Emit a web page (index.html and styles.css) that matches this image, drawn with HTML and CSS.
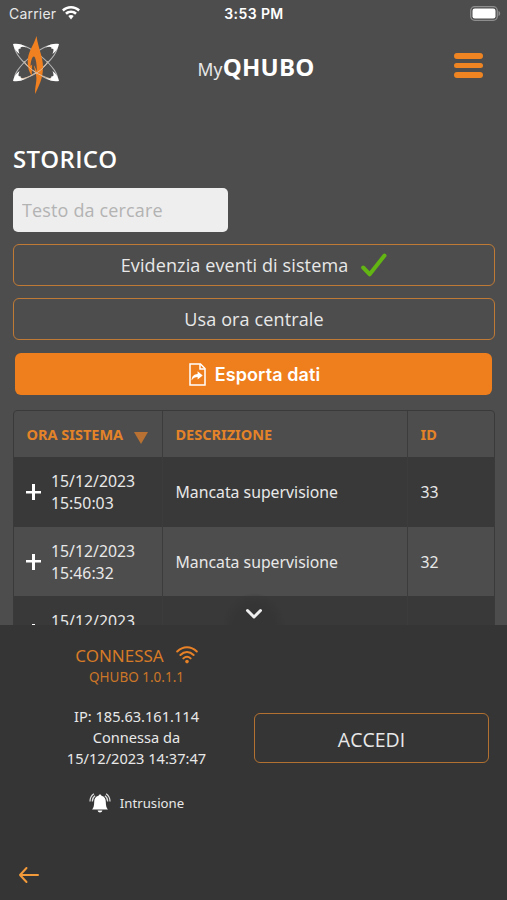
FILE: index.html
```html
<!DOCTYPE html>
<html lang="it">
<head>
<meta charset="utf-8">
<title>MyQHUBO</title>
<link rel="stylesheet" href="styles.css">
</head>
<body>
<div class="status">
  <div class="carrier">Carrier
    <svg width="18" height="14" viewBox="0 0 18 14" fill="#fff"><path d="M9 0C5.500 0 2.400 1.400 0 3.600l1.700 1.900C3.700 3.700 6.200 2.600 9 2.600s5.300 1.100 7.300 2.900L18 3.600C15.600 1.400 12.500 0 9 0z"/><path d="M9 4.500c-2.300 0-4.300.9-5.900 2.300l1.800 1.900C6 7.700 7.400 7.100 9 7.100s3 .6 4.100 1.600l1.800-1.900C13.300 5.400 11.300 4.500 9 4.500z"/><path d="M9 9c-1.100 0-2 .4-2.700 1L9 13.500l2.700-3.500C11 9.400 10.100 9 9 9z"/></svg>
  </div>
  <div class="clock">3:53 PM</div>
  <svg class="battery" width="31" height="15" viewBox="0 0 31 15"><rect x=".7" y=".7" width="26.600" height="13.600" rx="4" fill="none" stroke="#8e8e8e" stroke-width="1.300"/><rect x="2.500" y="2.500" width="23" height="10" rx="2.300" fill="#fff"/><path d="M28.500 5v5c1-.3 1.700-1.300 1.700-2.500S29.500 5.300 28.500 5z" fill="#8e8e8e"/></svg>
</div>
<header class="topbar">
  <svg class="logo" width="46" height="58" viewBox="0 0 46 58">
    <g fill="none" stroke="#b4b4b4" stroke-width="1"><ellipse cx="23" cy="26.500" rx="26.500" ry="8" transform="rotate(39 23 26.500)"/><ellipse cx="23" cy="26.500" rx="26.500" ry="8" transform="rotate(-39 23 26.500)"/></g>
    <g fill="#fff"><path d="M0 8c4-.8 9-.2 13.500 3.500C9 10 7 11 7.500 13 5 12 5 14 6.500 18 2.500 15 .5 11.500 0 8z"/><path d="M46 8c-4-.8-9-.2-13.500 3.500C37 10 39 11 38.500 13c2.500-1 2.500 1 1 5 4-3 6-6.500 6.500-10z"/><path d="M0 45c4 .8 9 .2 13.500-3.500C9 43 7 42 7.500 40 5 41 5 39 6.500 35 2.500 38 .5 41.500 0 45z"/><path d="M46 45c-4 .8-9 .2-13.500-3.500C37 43 39 42 38.500 40c2.500 1 2.500-1 1-5 4 3 6 6.500 6.500 10z"/></g>
    <path d="M23.500 0C20.500 10 14.500 16 14.700 26c.1 6 1.300 10 4.300 14-.5-4 0-9 1.200-13l2.300 10c2.500 7-1 13-.3 21C25.700 50 30 43 30 31 30 20 25 12 23.500 0z" fill="#f08020"/>
    <path d="M17.500 30c.3-5 1.700-9.500 3.200-9.500 2 0 3 7 3.300 15l-2.800-6-1.700 9c-.3-3-.5-6-.3-10z" fill="#5a5049"/>
    <path d="M11 25c4 8 16 15 27 18M35 25C31 34 19 41 8 43" fill="none" stroke="#dfc3a8" stroke-width=".9"/>
  </svg>
  <h1 class="brand">My<b>QHUBO</b></h1>
  <div class="menu"><span></span><span></span><span></span></div>
</header>
<main class="content">
  <h2>STORICO</h2>
  <input class="search" type="text" placeholder="Testo da cercare">
  <button class="outline first"><span>Evidenzia eventi di sistema</span>
    <svg width="26" height="24" viewBox="0 0 26 24" fill="none" stroke="#62b512" stroke-width="4" stroke-linecap="round" stroke-linejoin="round"><path d="M2.200 14.500l6.500 6.800L23.500 2.500"/></svg>
  </button>
  <button class="outline second"><span>Usa ora centrale</span></button>
  <button class="export">
    <svg width="17" height="23" viewBox="0 0 17 23" fill="none" stroke="#fff" stroke-width="1.500"><path d="M1 1h10.500L16 5.500V22H1z"/><path d="M11 1v5h5"/><path d="M2.600 17.500c.2-4.500 2.400-6.500 6-6.600V8.200l5.100 4.200-5.100 4V14c-2.500 0-4.300.8-6 3.500z" fill="#fff" stroke="none"/></svg>
    <span>Esporta dati</span>
  </button>
  <div class="table">
    <div class="row head"><div class="cell">ORA SISTEMA<i class="sort"></i></div><div class="cell">DESCRIZIONE</div><div class="cell">ID</div></div>
    <div class="row dark"><div class="cell"><i class="plus"></i><span>15/12/2023<br>15:50:03</span></div><div class="cell">Mancata supervisione</div><div class="cell">33</div></div>
    <div class="row"><div class="cell"><i class="plus"></i><span>15/12/2023<br>15:46:32</span></div><div class="cell">Mancata supervisione</div><div class="cell">32</div></div>
    <div class="row dark"><div class="cell"><i class="plus"></i><span>15/12/2023</span></div><div class="cell"></div><div class="cell"></div></div>
  </div>
</main>
<section class="sheet">
  <div class="handle"><svg width="18" height="12" viewBox="0 0 18 12" fill="none" stroke="#eee" stroke-width="3" stroke-linecap="round" stroke-linejoin="round"><path d="M2.500 2.500L9 9l6.500-6.500"/></svg></div>
  <div class="panels">
    <div class="info">
      <div class="state"><span>CONNESSA</span>
        <svg width="22" height="18" viewBox="0 0 22 18" fill="none" stroke="#e98227" stroke-width="2" stroke-linecap="round"><path d="M1.200 5.500C7-.3 15-.3 20.800 5.500M4.400 9c4-4 9.200-4 13.200 0M7.400 12.400c2.300-2.200 4.900-2.200 7.200 0"/><circle cx="11" cy="15.600" r="1.800" fill="#e98227" stroke="none"/></svg>
      </div>
      <div class="version">QHUBO 1.0.1.1</div>
      <div class="details">IP: 185.63.161.114<br>Connessa da<br>15/12/2023 14:37:47</div>
      <div class="alarm">
        <svg width="22" height="20" viewBox="0 0 22 20"><path d="M11 1.500c.9 0 1.400.6 1.400 1.300 3.200.7 4.400 3 4.400 6.100 0 4 .8 5.800 2.100 7.600H3.100c1.300-1.800 2.100-3.600 2.100-7.600 0-3.100 1.200-5.400 4.400-6.100 0-.7.500-1.300 1.400-1.300zM8.600 17.500h4.800c-.3 1.300-1.200 2-2.400 2s-2.100-.7-2.400-2z" fill="#fff"/><path d="M1 8.500c0-3.500 1.100-5.800 3.900-7.700M3.300 8.500c0-2.700.8-4.300 2.800-5.700M21 8.500c0-3.500-1.100-5.800-3.900-7.700M18.700 8.500c0-2.700-.8-4.300-2.800-5.700" fill="none" stroke="#ddd" stroke-width="1.200"/></svg>
        <span>Intrusione</span>
      </div>
    </div>
    <button class="login">ACCEDI</button>
  </div>
  <svg class="back" width="22" height="18" viewBox="0 0 22 18" fill="none" stroke="#f39a3b" stroke-width="2" stroke-linecap="round" stroke-linejoin="round"><path d="M20 9H2M8.500 2L2 9l6.500 7"/></svg>
</section>
</body>
</html>
```
FILE: styles.css
```css
* { box-sizing: border-box; }
body { margin: 0; height: 900px; overflow: hidden; position: relative; background: #4d4d4d; color: #e8e8e8; font-family: "Noto Sans", "Open Sans", sans-serif; }
svg { display: block; flex: none; }
button { font: inherit; color: inherit; background: none; padding: 0; display: flex; align-items: center; justify-content: center; }
.status { height: 28px; padding: 0 6px 0 9px; display: grid; grid-template-columns: 1fr auto 1fr; align-items: center; font-family: Inter, sans-serif; font-size: 14px; }
.carrier { display: flex; gap: 6px; align-items: center; letter-spacing: .2px; margin-top: -2px; }
.clock { font-weight: 600; color: #fff; letter-spacing: .4px; margin: -1px 2px 0 0; }
.battery { justify-self: end; margin-top: -1px; }
.topbar { height: 82px; padding: 8px 24px 0 13px; display: grid; grid-template-columns: 1fr auto 1fr; align-items: start; }
.brand { margin: 14px -8px 0 8px; font-size: 17.500px; font-weight: 400; line-height: 36px; letter-spacing: .2px; }
.brand b { font: 700 24px "Open Sans", sans-serif; letter-spacing: .2px; color: #fff; }
.menu { justify-self: end; display: grid; gap: 4px; margin-top: 17px; }
.menu span { width: 29px; height: 5.500px; border-radius: 3px; background: #ef8422; }
.content { padding: 32px 12px 0 13px; }
h2 { margin: 0; height: 46px; font: 600 24px/34px "Open Sans", sans-serif; letter-spacing: .3px; color: #fff; }
.search { display: block; width: 215px; height: 44px; padding: 0 8px 0 9px; border: 0; border-radius: 5px; background: #eee; font: 18px "Open Sans", sans-serif; letter-spacing: .15px; }
.search::placeholder { color: #b3b3b3; opacity: 1; }
.outline { width: 100%; height: 42px; border: 1.500px solid #c07a36; border-radius: 6px; font: 18px "Open Sans", sans-serif; letter-spacing: .12px; gap: 13px; }
.first { margin-top: 12px; }
.second { margin-top: 12px; }
.export { width: calc(100% - 5px); height: 42px; margin: 13px 0 15px 2px; padding: 1px 0 0 2px; border: 0; border-radius: 6px; background: #ef7e1c; color: #fff; font-family: Inter, sans-serif; font-size: 18px; font-weight: 600; gap: 9px; letter-spacing: .1px; }
.table { border: 1px solid #3a3a3a; border-radius: 4px 4px 0 0; font-size: 15.800px; }
.row { display: grid; grid-template-columns: 149px 245px 1fr; height: 69px; }
.row.dark { background: #393939; height: 70px; }
.row.head { height: 46px; font-size: 14.500px; font-weight: 700; color: #e48328; }
.cell { display: flex; align-items: center; padding-left: 12.500px; line-height: 22px; border-right: 1px solid #3c3c3c; }
.cell:last-child { border-right: 0; }
.sort { margin: 7px 0 0 11px; border: 7px solid transparent; border-top: 12px solid #b87132; border-bottom: 0; }
.plus { flex: none; width: 15px; height: 16px; margin: 0 10.500px 0 -1px; background: linear-gradient(#fff, #fff) center / 100% 2.500px no-repeat, linear-gradient(#fff, #fff) center / 3px 100% no-repeat; }
.row:last-child .cell { align-items: flex-start; padding-top: 14px; }
.row:last-child .plus { margin-top: 14px; }
.sheet { position: absolute; left: 0; right: 0; top: 625px; height: 275px; background: #353535; }
.handle { position: absolute; left: 222px; top: -33px; width: 64px; height: 33px; padding-top: 16px; display: flex; justify-content: center; background: radial-gradient(circle at 50% 100%, #353535 20px, #35353500 32px); }
.panels { height: 238px; display: grid; grid-template-columns: 273px 1fr; padding-right: 18px; }
.info { display: flex; flex-direction: column; align-items: center; padding-top: 17px; }
.state { display: flex; gap: 12px; height: 26px; align-items: center; font-size: 17px; color: #d87b27; }
.version { height: 18px; line-height: 18px; font-size: 13.500px; color: #cc7628; }
.details { margin-top: 20px; text-align: center; font-size: 14.600px; line-height: 21px; }
.alarm { margin-top: 24px; display: flex; gap: 9px; align-items: center; font-size: 13.200px; height: 20px; }
.login { align-self: start; margin: 88px 0 0 -19px; padding-top: 2px; height: 50px; border: 1.500px solid #b27130; border-radius: 6px; font: 19.500px "Open Sans", sans-serif; }
.back { margin: 3px 0 0 18px; }
```
